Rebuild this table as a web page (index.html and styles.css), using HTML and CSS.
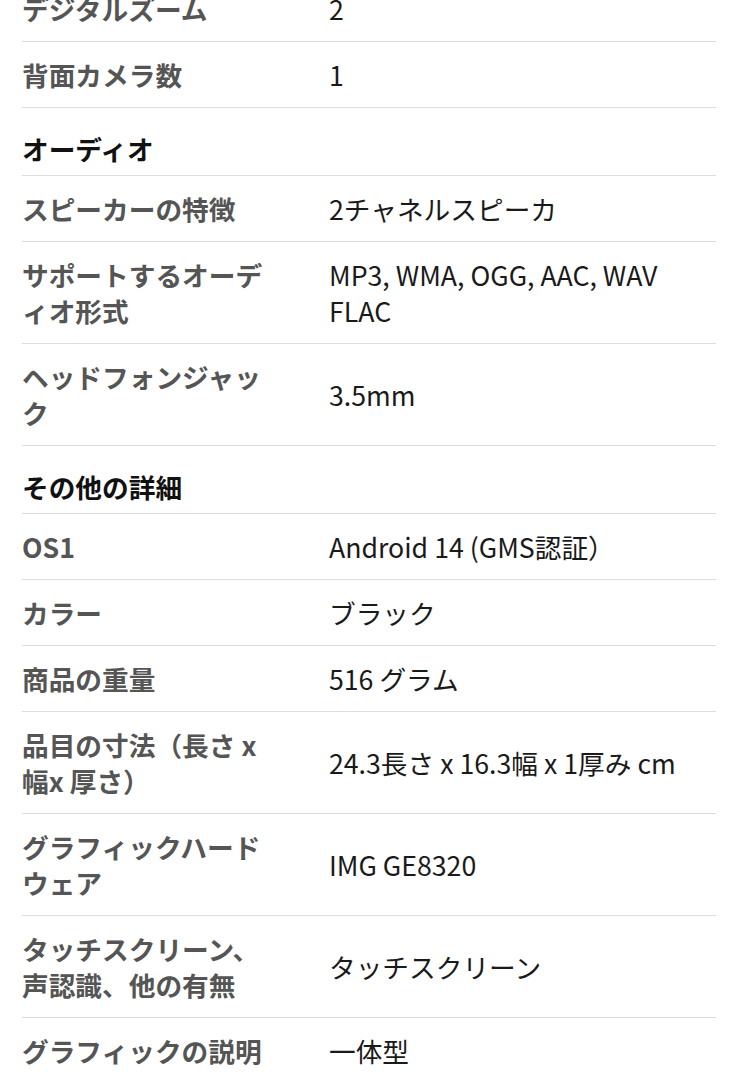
FILE: index.html
```html
<!DOCTYPE html>
<html lang="ja">
<head>
<meta charset="utf-8">
<link rel="stylesheet" href="styles.css">
</head>
<body>
<div class="specs">
  <div class="row"><div class="label">デジタルズーム</div><div class="value">2</div></div>
  <div class="row"><div class="label">背面カメラ数</div><div class="value">1</div></div>
  <div class="section">オーディオ</div>
  <div class="row"><div class="label">スピーカーの特徴</div><div class="value">2チャネルスピーカ</div></div>
  <div class="row"><div class="label">サポートするオーディオ形式</div><div class="value">MP3, WMA, OGG, AAC, WAV<br>FLAC</div></div>
  <div class="row"><div class="label">ヘッドフォンジャック</div><div class="value">3.5mm</div></div>
  <div class="section">その他の詳細</div>
  <div class="row"><div class="label">OS1</div><div class="value">Android 14 (GMS認証）</div></div>
  <div class="row"><div class="label">カラー</div><div class="value">ブラック</div></div>
  <div class="row"><div class="label">商品の重量</div><div class="value">516 グラム</div></div>
  <div class="row"><div class="label">品目の寸法（長さ x 幅x 厚さ）</div><div class="value">24.3長さ x 16.3幅 x 1厚み cm</div></div>
  <div class="row"><div class="label">グラフィックハードウェア</div><div class="value">IMG GE8320</div></div>
  <div class="row"><div class="label">タッチスクリーン、声認識、他の有無</div><div class="value">タッチスクリーン</div></div>
  <div class="row"><div class="label">グラフィックの説明</div><div class="value">一体型</div></div>
</div>
</body>
</html>
```
FILE: styles.css
```css
html, body {
  margin: 0;
  padding: 0;
  background: #ffffff;
}
body {
  font-family: "Noto Sans CJK JP", "Noto Sans", sans-serif;
  font-size: 26.7px;
  line-height: 36px;
  overflow: hidden;
}
.specs {
  margin: -24px 22px 0 22px;
}
.row {
  display: flex;
  align-items: center;
  padding: 15px 0 14px 0;
  border-bottom: 1px solid #dcdcdc;
}
.label {
  width: 258px;
  flex: none;
  margin-right: 49px;
  font-weight: 700;
  color: #555555;
  line-break: anywhere;
  word-break: break-all;
}
.value {
  flex: 1;
  color: #1a1a1a;
  font-weight: 400;
}
.section {
  padding: 23px 0 8px 0;
  border-bottom: 1px solid #dcdcdc;
  font-weight: 700;
  color: #111111;
}
```
